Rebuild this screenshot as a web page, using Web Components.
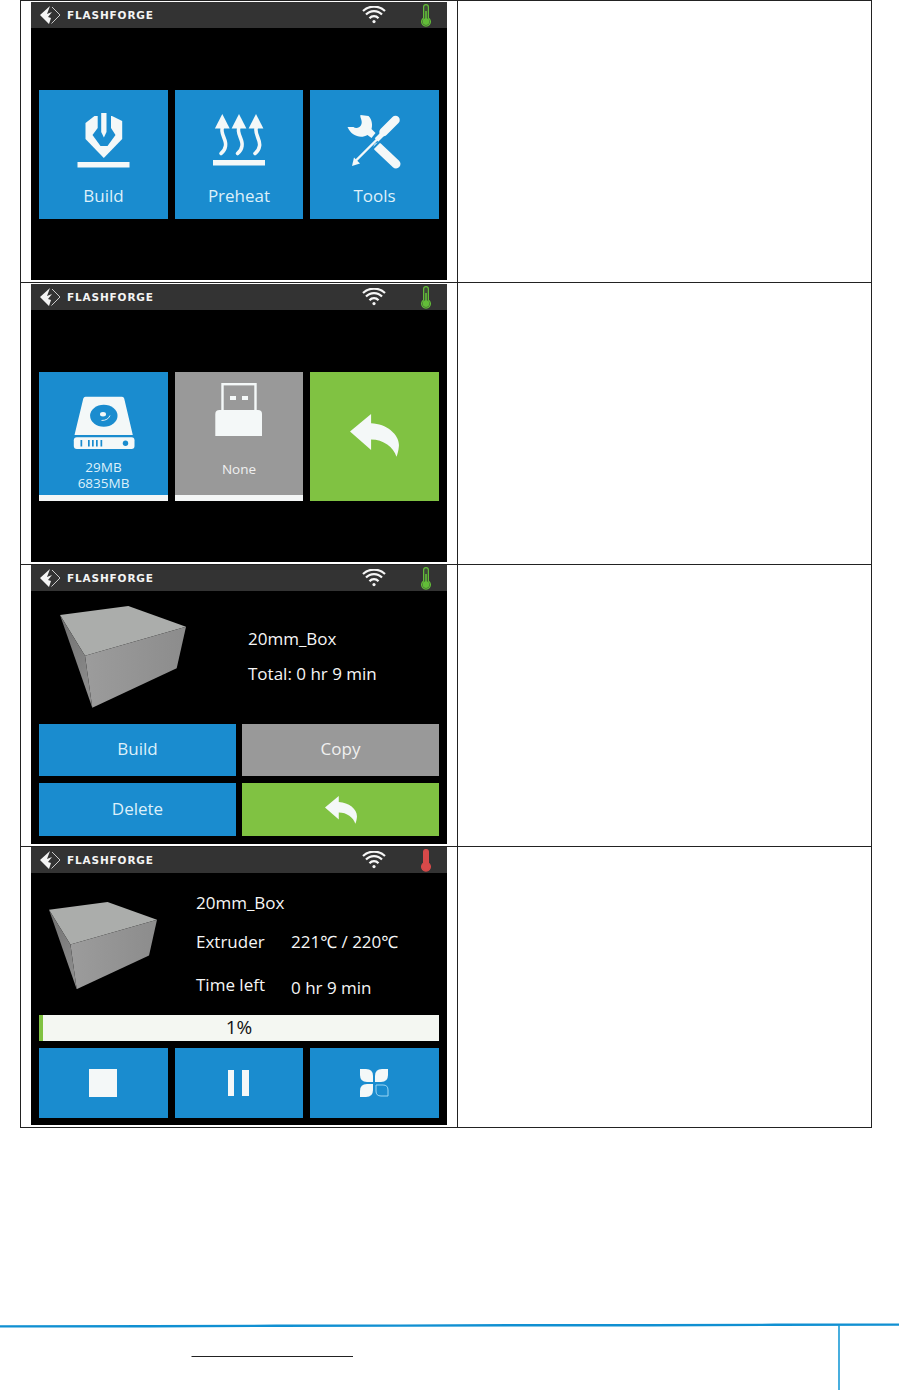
<!DOCTYPE html>
<html>
<head>
<meta charset="utf-8">
<title>Printer screens</title>
<style>
    html, body { margin: 0; padding: 0; background: #FFF; }
    body { font-family: "Open Sans", "Noto Sans", sans-serif; }
</style>
</head>
<body>

<fs-manual>
    <fs-row>
        <fs-screen>
            <fs-tiles style="padding-top: 62px">
                <fs-tile tone="blue" pad="11">
                    <fs-icon name="build" width="60" height="60" style="margin-top: 21px"></fs-icon>
                    <span slot="label">Build</span>
                </fs-tile>
                <fs-tile tone="blue" pad="11">
                    <fs-icon name="preheat" width="60" height="60" style="margin-top: 21px"></fs-icon>
                    <span slot="label">Preheat</span>
                </fs-tile>
                <fs-tile tone="blue" pad="11">
                    <fs-icon name="tools" width="60" height="60" style="margin-top: 21px"></fs-icon>
                    <span slot="label">Tools</span>
                </fs-tile>
            </fs-tiles>
        </fs-screen>
    </fs-row>

    <fs-row>
        <fs-screen>
            <fs-tiles style="padding-top: 62px">
                <fs-tile tone="blue" bar pad="4" small>
                    <fs-icon name="disk" width="64" height="60" style="margin-top: 20px"></fs-icon>
                    <span slot="label">29MB<br>6835MB</span>
                </fs-tile>
                <fs-tile tone="gray" bar pad="18" small>
                    <fs-icon name="usb" width="60" height="60" style="margin-top: 8px"></fs-icon>
                    <span slot="label">None</span>
                </fs-tile>
                <fs-tile tone="green">
                    <fs-icon name="back" width="49" height="43" style="margin-top: 42px"></fs-icon>
                </fs-tile>
            </fs-tiles>
        </fs-screen>
    </fs-row>

    <fs-row tight>
        <fs-screen style="height: 279px">
            <fs-file-info>
                <fs-cube slot="cube" width="126" style="margin-left: 29px"></fs-cube>
                <div>20mm_Box</div>
                <div>Total: 0 hr 9 min</div>
            </fs-file-info>
            <fs-actions>
                <fs-wide-button tone="blue">Build</fs-wide-button>
                <fs-wide-button tone="gray">Copy</fs-wide-button>
                <fs-wide-button tone="blue">Delete</fs-wide-button>
                <fs-wide-button tone="green"><fs-icon name="back" width="32" height="28"></fs-icon></fs-wide-button>
            </fs-actions>
        </fs-screen>
    </fs-row>

    <fs-row tight last>
        <fs-screen hot>
            <fs-job>
                <fs-cube slot="cube" width="108"></fs-cube>
                <span slot="name">20mm_Box</span>
                <span slot="k1">Extruder</span>
                <span slot="v1">221℃ / 220℃</span>
                <span slot="k2">Time left</span>
                <span slot="v2">0 hr 9 min</span>
            </fs-job>
            <fs-progress value="1"></fs-progress>
            <fs-tiles style="padding-top: 7px">
                <fs-tile tone="blue" short><fs-icon name="stop" width="28" height="28" style="margin-right: 1px"></fs-icon></fs-tile>
                <fs-tile tone="blue" short><fs-icon name="pause" width="28" height="28"></fs-icon></fs-tile>
                <fs-tile tone="blue" short><fs-icon name="leaves" width="30" height="28"></fs-icon></fs-tile>
            </fs-tiles>
        </fs-screen>
    </fs-row>
</fs-manual>

<fs-footer></fs-footer>

<script>
// icons are drawn in the coordinates they were measured in, the viewBox crops them
const ICONS = {
    build: {
        box: '73.5 111 60 60',
        body: `
            <path fill="#F4F8F8" d="M94 116 L85 123 V139 L103.3 158 L121.7 139 V121 L111.5 116 Z"/>
            <path fill="#1A8CCF" d="M97.2 111 V128 L92 135 L100 146 H107 L115 135 L110.5 128 V111 Z"/>
            <path fill="#F4F8F8" d="M100.7 113 H106 V132 L103.4 137.5 L100.7 132 Z"/>
            <rect fill="#F4F8F8" x="77" y="162" width="52" height="5.5"/>`
    },
    preheat: {
        box: '209 111 60 60',
        body: `
            <rect fill="#F4F8F8" x="213" y="160" width="52" height="5.5"/>
            <g fill="#F4F8F8">
                <path d="M222.3 114 L229.7 128.5 H214.9 Z"/>
                <path d="M239 114 L246.4 128.5 H231.6 Z"/>
                <path d="M256 114 L263.4 128.5 H248.6 Z"/>
            </g>
            <g fill="none" stroke="#F4F8F8" stroke-width="3.6" stroke-linecap="round">
                <path d="M222.5 127 C219.5 133 227 140 225.5 146 C225 149.5 223 152 221 153.5"/>
                <path d="M239 127 C236 133 243.5 140 242 146 C241.5 149.5 239.5 152 237.5 153.5"/>
                <path d="M256.5 127 C253.5 133 261 140 259.5 146 C259 149.5 257 152 255 153.5"/>
            </g>`
    },
    tools: {
        box: '344.5 111 60 60',
        body: `
            <path fill="#F4F8F8" d="M360 115 L368 116 C372 120 372 126 371 129 L375 133 L371 138 L367 135 C360 139 351 136 347 127 L353 127 C355 129 360 128 361 124 C362 120 359 117 360 115 Z"/>
            <path stroke="#F4F8F8" stroke-width="9" stroke-linecap="round" d="M377.5 147 L395.5 164"/>
            <path stroke="#1A8CCF" stroke-width="2" d="M372 149 L384 137"/>
            <path stroke="#F4F8F8" stroke-width="8.5" stroke-linecap="round" d="M395 120 L383 132"/>
            <path stroke="#F4F8F8" stroke-width="5" d="M383 133 L376 140"/>
            <path stroke="#F4F8F8" stroke-width="2.4" d="M377 139 L355 161"/>
            <path fill="#F4F8F8" d="M351.5 166 L353.5 157.5 L359.5 163.5 Z"/>`
    },
    disk: {
        box: '71.5 392 64 60',
        body: `
            <path fill="#F4F8F8" d="M85 396.7 H121.5 Q123.3 396.7 123.7 398.5 L132.3 435 H74 L82.8 398.5 Q83.3 396.7 85 396.7 Z"/>
            <ellipse fill="#1A8CCF" cx="103.3" cy="415.7" rx="13.7" ry="11"/>
            <ellipse fill="#F4F8F8" cx="102.5" cy="414.3" rx="3" ry="2.2"/>
            <path fill="none" stroke="#F4F8F8" stroke-width="0.9" d="M101 420.5 Q107.5 420.5 109.5 415.5"/>
            <rect fill="#F4F8F8" x="73.3" y="437.3" width="60.7" height="11.7" rx="3"/>
            <g fill="#1A8CCF">
                <rect x="80" y="440" width="1.7" height="6.5"/>
                <rect x="87.5" y="440" width="1.7" height="6.5"/>
                <rect x="91.5" y="440" width="1.7" height="6.5"/>
                <rect x="95.5" y="440" width="1.7" height="6.5"/>
                <rect x="100" y="440" width="1.7" height="6.5"/>
                <circle cx="125" cy="443.3" r="2.7"/>
            </g>`
    },
    usb: {
        box: '209 380 60 60',
        body: `
            <rect fill="none" stroke="#F4F8F8" stroke-width="2.4" x="222.5" y="384.2" width="33" height="28"/>
            <rect fill="#F4F8F8" x="230" y="396" width="6" height="4"/>
            <rect fill="#F4F8F8" x="242" y="396" width="6" height="4"/>
            <path fill="#F4F8F8" d="M219.5 410 H258 Q262 410 262 414 V436 H215.3 V414 Q215.3 410 219.5 410 Z"/>`
    },
    back: {
        box: '350.7 414.3 48.8 42.6',
        body: `<path fill="#F4F8F8" d="M350.7 431.7 L371.7 414.3 V423.5 C388 424 401 436 399.3 447 C399 451 398 454 397 456.7 C394 447 384 439.5 371.7 439.5 V450 Z"/>`
    },
    stop: {
        box: '0 0 28 28',
        body: `<rect fill="#F4F8F8" width="28" height="28"/>`
    },
    pause: {
        box: '0 0 28 28',
        body: `<rect fill="#F4F8F8" x="3" y="1" width="6" height="26"/><rect fill="#F4F8F8" x="17" y="1" width="7" height="26"/>`
    },
    leaves: {
        box: '0 0 30 28',
        body: `
            <path fill="#F4F8F8" d="M0 0 H6 Q13 0 13 7 V13 H7 Q0 13 0 6 Z"/>
            <path fill="#F4F8F8" d="M28 0 H22 Q15 0 15 7 V13 H21 Q28 13 28 6 Z"/>
            <path fill="#F4F8F8" d="M0 28 H6 Q13 28 13 21 V15 H7 Q0 15 0 22 Z"/>
            <path fill="none" stroke="#9AD6F4" d="M16 16 H23 Q28 16 28 21 V27 H21 Q16 27 16 22 Z"/>`
    }
};

class FsIcon extends HTMLElement {
    connectedCallback() {
        const icon = ICONS[this.getAttribute('name')];
        const w = this.getAttribute('width');
        const h = this.getAttribute('height');
        this.attachShadow({ mode: 'open' });
        this.shadowRoot.innerHTML = `
            <style>:host { display: block; line-height: 0; } svg { display: block; }</style>
            <svg width="${w}" height="${h}" viewBox="${icon.box}">${icon.body}</svg>`;
    }
}

const manualTemplate = document.createElement('template');
manualTemplate.innerHTML = `
    <style>
        :host {
            display: block;
            width: 850px;
            margin-left: 20px;
            border-top: 1px solid #222;
            border-left: 1px solid #222;
            border-right: 1px solid #222;
        }
    </style>
    <slot></slot>
`;

class FsManual extends HTMLElement {
    constructor() {
        super();
        this.attachShadow({ mode: 'open' });
        this.shadowRoot.appendChild(manualTemplate.content.cloneNode(true));
    }
}

const rowTemplate = document.createElement('template');
rowTemplate.innerHTML = `
    <style>
        :host {
            display: grid;
            grid-template-columns: 437px 1fr;
            height: 281px;
            border-bottom: 1px solid #222;
        }
        :host([last]) { height: 280px; }
        .left { padding: 1px 0 0 10px; border-right: 1px solid #222; }
        :host([tight]) .left { padding-top: 0; }
    </style>
    <div class="left"><slot></slot></div>
    <div class="right"></div>
`;

class FsRow extends HTMLElement {
    constructor() {
        super();
        this.attachShadow({ mode: 'open' });
        this.shadowRoot.appendChild(rowTemplate.content.cloneNode(true));
    }
}

const screenTemplate = document.createElement('template');
screenTemplate.innerHTML = `
    <style>
        :host {
            display: flex;
            flex-direction: column;
            width: 416px;
            height: 278px;
            background: #000;
            color: #F4F8F8;
            overflow: hidden;
        }
        header {
            display: flex;
            align-items: center;
            flex: none;
            height: 26px;
            background: #333;
        }
        .logo { margin-left: 8px; display: block; }
        .brand {
            margin-left: 6px;
            font: bold 10.5px "DejaVu Sans", sans-serif;
            letter-spacing: 0.85px;
            color: #F4F4F4;
        }
        .wifi { margin-left: auto; display: block; }
        .temp { margin: 0 16px 0 35px; display: block; }
        .tube { fill: #3E4A38; stroke: #62BC38; }
        .bulb { fill: #62BC38; }
        :host([hot]) .tube { fill: #D84A4A; stroke: #D84A4A; }
        :host([hot]) .bulb { fill: #D84A4A; }
    </style>
    <header>
        <svg class="logo" width="22" height="20" viewBox="0 0 22 20">
            <path fill="#F4F4F4" d="M11 1 L1 10 L10 19 L12 13 L9 12 L13 7 L8 9 Z"/>
            <path fill="none" stroke="#DDD" stroke-width="0.9" d="M13 2 L21 10 L12.5 18.5"/>
        </svg>
        <span class="brand">FLASHFORGE</span>
        <svg class="wifi" width="24" height="18" viewBox="0 0 24 18" fill="none" stroke="#F6F6F6" stroke-width="2.2">
            <path d="M1 5 A 16 16 0 0 1 23 5"/>
            <path d="M4 8.6 A 11 11 0 0 1 20 8.6"/>
            <path d="M7.5 12.2 A 6 6 0 0 1 16.5 12.2"/>
            <circle cx="12" cy="15.6" r="1.6" fill="#F6F6F6" stroke="none"/>
        </svg>
        <svg class="temp" width="10" height="23" viewBox="0 0 10 23">
            <path class="tube" stroke-width="1.2" d="M2.6 3 A2.4 2.4 0 0 1 7.4 3 V14 A4.4 4.4 0 1 1 2.6 14 Z"/>
            <circle class="bulb" cx="5" cy="17.6" r="3.4"/>
            <rect class="bulb" x="4.2" y="7" width="1.6" height="9"/>
        </svg>
    </header>
    <slot></slot>
`;

class FsScreen extends HTMLElement {
    constructor() {
        super();
        this.attachShadow({ mode: 'open' });
        this.shadowRoot.appendChild(screenTemplate.content.cloneNode(true));
    }
}

const tilesTemplate = document.createElement('template');
tilesTemplate.innerHTML = `
    <style>
        :host {
            display: grid;
            grid-template-columns: 129px 128px 129px;
            gap: 7px;
            padding: 0 8px;
        }
    </style>
    <slot></slot>
`;

class FsTiles extends HTMLElement {
    constructor() {
        super();
        this.attachShadow({ mode: 'open' });
        this.shadowRoot.appendChild(tilesTemplate.content.cloneNode(true));
    }
}

const tileTemplate = document.createElement('template');
tileTemplate.innerHTML = `
    <style>
        :host {
            display: flex;
            flex-direction: column;
            align-items: center;
            box-sizing: border-box;
            height: 129px;
            font-size: 17px;
            line-height: 24px;
            color: #DDF0FA;
        }
        :host([tone="blue"]) { background: #1A8CCF; }
        :host([tone="gray"]) { background: #999; color: #F0F0F0; }
        :host([tone="green"]) { background: #80C242; }
        :host([bar]) { border-bottom: 6px solid #F4F6F6; }
        :host([small]) { font-size: 13.5px; line-height: 16px; }
        :host([short]) { height: 70px; justify-content: center; }
        :host([short]) .label { display: none; }
        .label { margin-top: auto; text-align: center; padding-bottom: var(--pad, 0); }
    </style>
    <slot></slot>
    <div class="label"><slot name="label"></slot></div>
`;

class FsTile extends HTMLElement {
    constructor() {
        super();
        this.attachShadow({ mode: 'open' });
        this.shadowRoot.appendChild(tileTemplate.content.cloneNode(true));
    }
    connectedCallback() {
        this.style.setProperty('--pad', (this.getAttribute('pad') || 0) + 'px');
    }
}

class FsCube extends HTMLElement {
    connectedCallback() {
        const w = this.getAttribute('width');
        this.attachShadow({ mode: 'open' });
        this.shadowRoot.innerHTML = `
            <style>:host { display: block; line-height: 0; } svg { display: block; filter: blur(0.5px); }</style>
            <svg width="${w}" viewBox="60 606 126 102">
                <defs>
                    <linearGradient id="side" x1="0" y1="0" x2="1" y2="0">
                        <stop offset="0" stop-color="#9C9C9C"/>
                        <stop offset="1" stop-color="#8C8C8C"/>
                    </linearGradient>
                    <linearGradient id="flank" x1="0" y1="0" x2="0.6" y2="1">
                        <stop offset="0" stop-color="#707070"/>
                        <stop offset="1" stop-color="#8C8C8C"/>
                    </linearGradient>
                </defs>
                <polygon fill="#ABADAB" points="60,615 128.3,606 186,626.7 85,655.7"/>
                <polygon fill="url(#side)" points="85,655.7 186,626.7 176.7,668.3 92.3,707.7"/>
                <polygon fill="url(#flank)" points="60,615 85,655.7 92.3,707.7"/>
            </svg>`;
    }
}

const fileInfoTemplate = document.createElement('template');
fileInfoTemplate.innerHTML = `
    <style>
        :host {
            display: flex;
            height: 133px;
            padding-top: 15px;
            box-sizing: border-box;
            font-size: 17px;
            color: #F6F6F6;
        }
        .text {
            margin-left: 62px;
            padding-top: 21px;
            display: flex;
            flex-direction: column;
            gap: 11px;
            line-height: 24px;
        }
    </style>
    <slot name="cube"></slot>
    <div class="text"><slot></slot></div>
`;

class FsFileInfo extends HTMLElement {
    constructor() {
        super();
        this.attachShadow({ mode: 'open' });
        this.shadowRoot.appendChild(fileInfoTemplate.content.cloneNode(true));
    }
}

const actionsTemplate = document.createElement('template');
actionsTemplate.innerHTML = `
    <style>
        :host {
            display: grid;
            grid-template-columns: 197px 197px;
            grid-template-rows: 52px 53px;
            column-gap: 6px;
            row-gap: 7px;
            padding: 0 8px;
        }
    </style>
    <slot></slot>
`;

class FsActions extends HTMLElement {
    constructor() {
        super();
        this.attachShadow({ mode: 'open' });
        this.shadowRoot.appendChild(actionsTemplate.content.cloneNode(true));
    }
}

const wideButtonTemplate = document.createElement('template');
wideButtonTemplate.innerHTML = `
    <style>
        :host {
            display: flex;
            align-items: center;
            justify-content: center;
            box-sizing: border-box;
            font-size: 17px;
            color: #DDF0FA;
        }
        :host([tone="blue"]) { background: #1A8CCF; padding-bottom: 3px; }
        :host([tone="gray"]) { background: #999; color: #F0F0F0; padding-bottom: 3px; }
        :host([tone="green"]) { background: #80C242; }
    </style>
    <slot></slot>
`;

class FsWideButton extends HTMLElement {
    constructor() {
        super();
        this.attachShadow({ mode: 'open' });
        this.shadowRoot.appendChild(wideButtonTemplate.content.cloneNode(true));
    }
}

const jobTemplate = document.createElement('template');
jobTemplate.innerHTML = `
    <style>
        :host {
            display: flex;
            height: 142px;
            padding-top: 1px;
            box-sizing: border-box;
            font-size: 17px;
            color: #F6F6F6;
        }
        .cube { margin: 28px 0 0 18px; }
        .info {
            margin-left: 39px;
            display: grid;
            grid-template-columns: 95px auto;
            grid-template-rows: 39px 43px 24px;
            padding-top: 17px;
            line-height: 24px;
        }
        .name { grid-column: 1 / 3; }
        .low { position: relative; top: 3px; }
    </style>
    <div class="cube"><slot name="cube"></slot></div>
    <div class="info">
        <div class="name"><slot name="name"></slot></div>
        <div><slot name="k1"></slot></div>
        <div><slot name="v1"></slot></div>
        <div><slot name="k2"></slot></div>
        <div class="low"><slot name="v2"></slot></div>
    </div>
`;

class FsJob extends HTMLElement {
    constructor() {
        super();
        this.attachShadow({ mode: 'open' });
        this.shadowRoot.appendChild(jobTemplate.content.cloneNode(true));
    }
}

const progressTemplate = document.createElement('template');
progressTemplate.innerHTML = `
    <style>
        :host {
            display: block;
            margin: 0 8px;
            height: 26px;
            background: #F4F7F2;
            color: #111;
            font-size: 19px;
            line-height: 25px;
            text-align: center;
            box-sizing: border-box;
            border-left: 4px solid #80C242;
        }
        .value { margin-right: 4px; }
    </style>
    <div class="value"></div>
`;

// value comes from the attribute, bar colour is a fixed sliver like the device shows at 1%
class FsProgress extends HTMLElement {
    constructor() {
        super();
        this.attachShadow({ mode: 'open' });
        this.shadowRoot.appendChild(progressTemplate.content.cloneNode(true));
    }
    connectedCallback() {
        this.shadowRoot.querySelector('.value').textContent = this.getAttribute('value') + '%';
    }
}

const footerTemplate = document.createElement('template');
footerTemplate.innerHTML = `
    <style>
        :host { display: block; height: 68px; margin-top: 195px; overflow: hidden; }
        svg { display: block; }
    </style>
    <svg width="899" height="68" viewBox="0 0 899 68">
        <path fill="none" stroke="#1090D2" stroke-width="2.4" d="M0 3.4 L150 3.2 L276 2.8 L400 2.6 L525 2.2 L650 2.2 L775 1.8 L899 1.6"/>
        <path stroke="#1A9AD6" stroke-width="1.6" d="M839 2 V68"/>
        <path stroke="#222" stroke-width="1" d="M191.5 33.5 H353"/>
    </svg>
`;

class FsFooter extends HTMLElement {
    constructor() {
        super();
        this.attachShadow({ mode: 'open' });
        this.shadowRoot.appendChild(footerTemplate.content.cloneNode(true));
    }
}

customElements.define('fs-icon', FsIcon);
customElements.define('fs-manual', FsManual);
customElements.define('fs-row', FsRow);
customElements.define('fs-screen', FsScreen);
customElements.define('fs-tiles', FsTiles);
customElements.define('fs-tile', FsTile);
customElements.define('fs-cube', FsCube);
customElements.define('fs-file-info', FsFileInfo);
customElements.define('fs-actions', FsActions);
customElements.define('fs-wide-button', FsWideButton);
customElements.define('fs-job', FsJob);
customElements.define('fs-progress', FsProgress);
customElements.define('fs-footer', FsFooter);
</script>
</body>
</html>
